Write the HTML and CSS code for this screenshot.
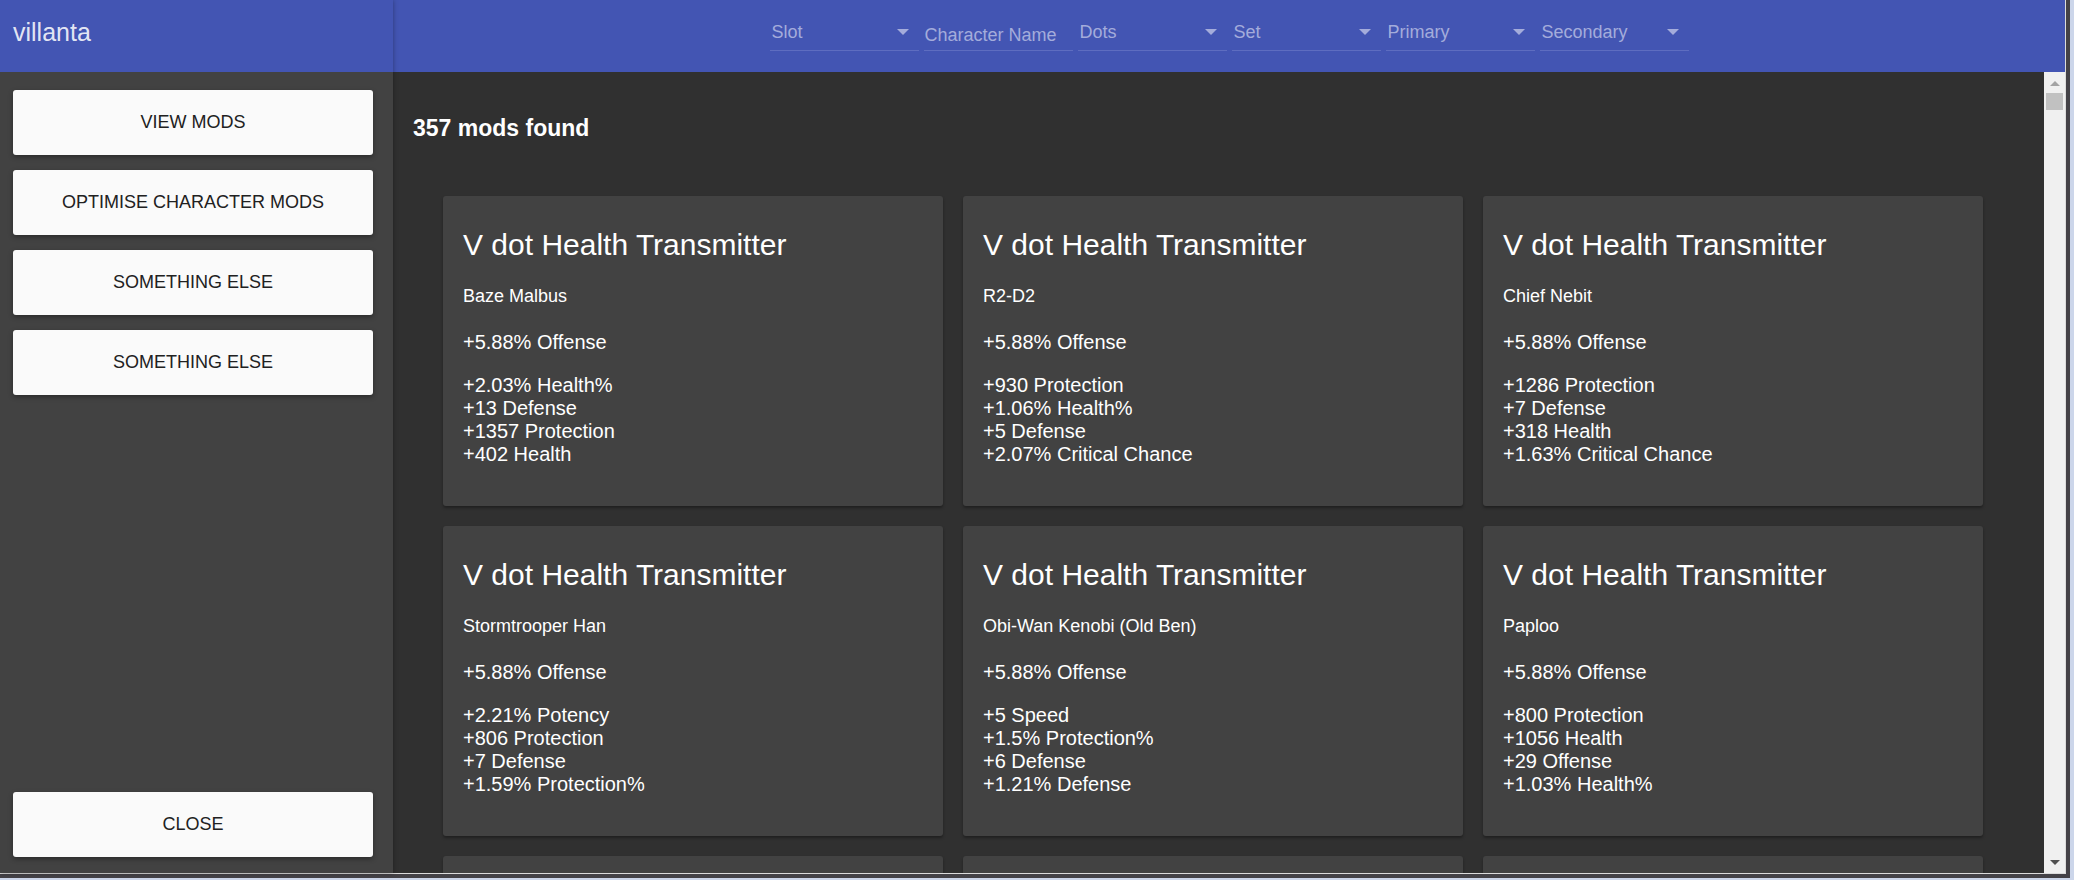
FILE: index.html
```html
<!DOCTYPE html>
<html lang="en">
<head>
<meta charset="utf-8">
<title>villanta</title>
<link rel="stylesheet" href="styles.css">
</head>
<body>
<div class="window">
  <aside class="sidebar">
    <div class="brand">villanta</div>
    <nav class="menu">
      <button class="menu-button" type="button">VIEW MODS</button>
      <button class="menu-button" type="button">OPTIMISE CHARACTER MODS</button>
      <button class="menu-button" type="button">SOMETHING ELSE</button>
      <button class="menu-button" type="button">SOMETHING ELSE</button>
      <button class="menu-button menu-close" type="button">CLOSE</button>
    </nav>
  </aside>
  <div class="content">
    <header class="toolbar">
      <div class="field"><select class="control" aria-label="Slot"><option>Slot</option></select><svg class="caret" viewBox="0 0 12 6"><path d="M0 0h12L6 6z"/></svg></div>
      <div class="field"><input class="control control-text" type="text" placeholder="Character Name" aria-label="Character Name"></div>
      <div class="field"><select class="control" aria-label="Dots"><option>Dots</option></select><svg class="caret" viewBox="0 0 12 6"><path d="M0 0h12L6 6z"/></svg></div>
      <div class="field"><select class="control" aria-label="Set"><option>Set</option></select><svg class="caret" viewBox="0 0 12 6"><path d="M0 0h12L6 6z"/></svg></div>
      <div class="field"><select class="control" aria-label="Primary"><option>Primary</option></select><svg class="caret" viewBox="0 0 12 6"><path d="M0 0h12L6 6z"/></svg></div>
      <div class="field"><select class="control" aria-label="Secondary"><option>Secondary</option></select><svg class="caret" viewBox="0 0 12 6"><path d="M0 0h12L6 6z"/></svg></div>
    </header>
    <div class="body">
      <main class="mods">
        <h3 class="count">357 mods found</h3>
        <div class="cards">
          <article class="card">
            <h2 class="card-title">V dot Health Transmitter</h2>
            <p class="card-owner">Baze Malbus</p>
            <p class="card-primary">+5.88% Offense</p>
            <ul class="card-stats"><li>+2.03% Health%</li><li>+13 Defense</li><li>+1357 Protection</li><li>+402 Health</li></ul>
          </article>
          <article class="card">
            <h2 class="card-title">V dot Health Transmitter</h2>
            <p class="card-owner">R2-D2</p>
            <p class="card-primary">+5.88% Offense</p>
            <ul class="card-stats"><li>+930 Protection</li><li>+1.06% Health%</li><li>+5 Defense</li><li>+2.07% Critical Chance</li></ul>
          </article>
          <article class="card">
            <h2 class="card-title">V dot Health Transmitter</h2>
            <p class="card-owner">Chief Nebit</p>
            <p class="card-primary">+5.88% Offense</p>
            <ul class="card-stats"><li>+1286 Protection</li><li>+7 Defense</li><li>+318 Health</li><li>+1.63% Critical Chance</li></ul>
          </article>
          <article class="card">
            <h2 class="card-title">V dot Health Transmitter</h2>
            <p class="card-owner">Stormtrooper Han</p>
            <p class="card-primary">+5.88% Offense</p>
            <ul class="card-stats"><li>+2.21% Potency</li><li>+806 Protection</li><li>+7 Defense</li><li>+1.59% Protection%</li></ul>
          </article>
          <article class="card">
            <h2 class="card-title">V dot Health Transmitter</h2>
            <p class="card-owner">Obi-Wan Kenobi (Old Ben)</p>
            <p class="card-primary">+5.88% Offense</p>
            <ul class="card-stats"><li>+5 Speed</li><li>+1.5% Protection%</li><li>+6 Defense</li><li>+1.21% Defense</li></ul>
          </article>
          <article class="card">
            <h2 class="card-title">V dot Health Transmitter</h2>
            <p class="card-owner">Paploo</p>
            <p class="card-primary">+5.88% Offense</p>
            <ul class="card-stats"><li>+800 Protection</li><li>+1056 Health</li><li>+29 Offense</li><li>+1.03% Health%</li></ul>
          </article>
          <article class="card"></article>
          <article class="card"></article>
          <article class="card"></article>
        </div>
      </main>
      <div class="scrollbar" aria-hidden="true">
        <svg class="scroll-arrow scroll-up" viewBox="0 0 10 5"><path d="M0 5h10L5 0z"/></svg>
        <div class="scroll-track"><div class="scroll-thumb"></div></div>
        <svg class="scroll-arrow scroll-down" viewBox="0 0 10 5"><path d="M0 0h10L5 5z"/></svg>
      </div>
    </div>
  </div>
</div>
</body>
</html>
```

FILE: styles.css
```css
* { box-sizing: border-box; }

body {
  margin: 0;
  height: 100vh;
  padding: 0 4px 2px 0;
  overflow: hidden;
  background: #ccd6ea;
  color: #fff;
  font: 20px/23px "Liberation Sans", Arial, sans-serif;
}

.window {
  display: flex;
  height: 100%;
  border: solid #444247;
  border-width: 0 4px 4px 0;
  box-shadow: inset -1px -1px #dcdcdc;
  padding: 0 1px 1px 0;
  background: #303030;
}

.sidebar {
  position: relative;
  z-index: 1;
  display: flex;
  flex: none;
  flex-direction: column;
  width: 393px;
  background: #424242;
  box-shadow: 0 0 5px rgba(0, 0, 0, 0.35);
}

.brand {
  height: 72px;
  padding: 18px 13px;
  background: #4355b3;
  color: rgba(255, 255, 255, 0.87);
  font-size: 25px;
  line-height: 29px;
}

.menu {
  display: flex;
  flex: 1;
  flex-direction: column;
  gap: 15px;
  padding: 18px 20px 16px 13px;
}

.menu-button {
  height: 65px;
  padding: 0;
  border: 0;
  border-radius: 3px;
  background: #fafafa;
  box-shadow: 0 2px 5px rgba(0, 0, 0, 0.35);
  color: #212121;
  font: inherit;
  font-size: 18px;
}

.menu-close { margin-top: auto; }

.content {
  display: flex;
  flex: 1;
  flex-direction: column;
  min-width: 0;
}

.toolbar {
  display: flex;
  flex: none;
  justify-content: center;
  gap: 5px;
  height: 72px;
  padding-top: 15px;
  background: #4355b3;
}

.field {
  position: relative;
  width: 149px;
}

.control {
  display: block;
  width: 100%;
  height: 36px;
  margin: 0;
  padding: 0 24px 0 2px;
  border: 0;
  border-bottom: 1px solid #5e6dc0;
  border-radius: 0;
  outline: 0;
  appearance: none;
  background: transparent;
  color: #a4acdb;
  font: inherit;
  font-size: 18px;
}

.control-text { padding: 6px 0 0 1px; }

.control::placeholder { color: #a4acdb; opacity: 1; }

.caret {
  position: absolute;
  top: 14px;
  right: 10px;
  width: 12px;
  height: 6px;
  fill: #a4acdb;
  pointer-events: none;
}

.body {
  display: flex;
  flex: 1;
  min-height: 0;
}

.mods {
  flex: 1;
  overflow: hidden;
  padding: 43px 31px 0 20px;
}

.count {
  margin: 0;
  font-size: 23px;
  line-height: 26px;
}

.cards {
  display: grid;
  grid-template-columns: repeat(auto-fill, 500px);
  justify-content: center;
  gap: 20px;
  margin-top: 55px;
}

.card {
  min-height: 310px;
  padding: 29px 20px;
  border-radius: 3px;
  background: #424242;
  box-shadow: 0 2px 3px rgba(0, 0, 0, 0.35);
}

.card-title {
  margin: 0;
  font-size: 30px;
  font-weight: 400;
  line-height: 40px;
}

.card-owner {
  margin: 19px 0 0;
  font-size: 18px;
  line-height: 24px;
}

.card-primary { margin: 23px 0 0; }

.card-stats {
  margin: 20px 0 0;
  padding: 0;
  list-style: none;
}

.scrollbar {
  display: flex;
  flex: none;
  flex-direction: column;
  align-items: center;
  width: 21px;
  padding: 9px 2px 8px;
  background: #f0f0f0;
}

.scroll-arrow { flex: none; width: 10px; height: 5px; }
.scroll-up { fill: #a3a3a3; }
.scroll-down { fill: #505050; }

.scroll-track {
  flex: 1;
  width: 100%;
  padding-top: 7px;
}

.scroll-thumb {
  height: 17px;
  background: #c1c1c1;
}
```
